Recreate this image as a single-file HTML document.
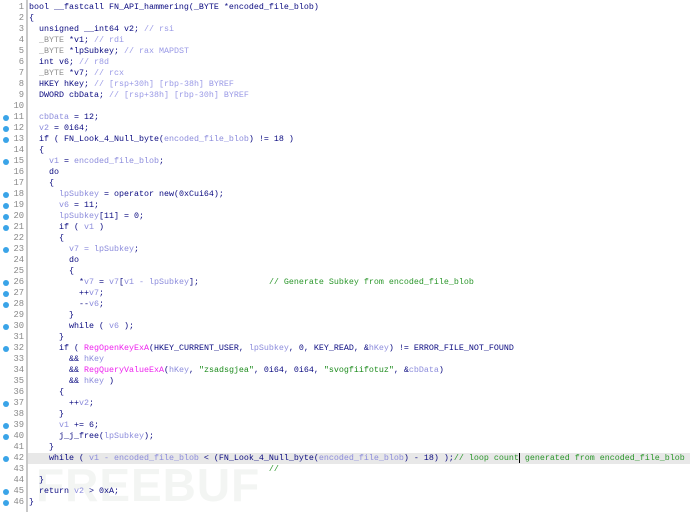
<!DOCTYPE html>
<html><head><meta charset="utf-8"><style>
html,body{margin:0;padding:0;background:#fff;width:690px;height:512px;overflow:hidden;position:relative}
#sep{position:absolute;left:26px;top:0;width:2px;height:512px;background:#c8c8c8}
#nums{position:absolute;left:0;top:0;width:26px;height:512px}
.ln{position:absolute;left:0;width:26px;text-align:right;font:8.8px/11px "Liberation Mono",monospace;color:#8a8a8a;padding-right:2px;box-sizing:border-box}
.dot{position:absolute;left:3px;width:6px;height:6px;border-radius:50%;background:#3aa4e8}
#code{position:absolute;left:29px;top:2px;width:661px;overflow:hidden;margin:0;font:8.33px/11px "Liberation Mono",monospace;color:#0a0a80;white-space:pre}
.v{color:#8c8cdc}.d{color:#909090}.c{color:#9a9ae6}.s{color:#1a8a1a}.f{color:#ee22ee}.g{color:#2a962a}
#hl{position:absolute;left:28px;top:453px;width:662px;height:11px;background:#e8e8e8}
#wm{position:absolute;left:36px;top:462px;font:bold 46px/46px "Liberation Sans",sans-serif;color:#f3f5f3;letter-spacing:1px}
.cur{border-left:1px solid #000}
</style></head><body>
<div id="hl"></div>
<div id="wm">FREEBUF</div>
<div id="sep"></div>
<div id="nums"></div>
<pre id="code">bool __fastcall FN_API_hammering(_BYTE *encoded_file_blob)
{
  unsigned __int64 v2; <span class="c">// rsi</span>
  <span class="d">_BYTE</span> *v1; <span class="c">// rdi</span>
  <span class="d">_BYTE</span> *lpSubkey; <span class="c">// rax MAPDST</span>
  int v6; <span class="c">// r8d</span>
  <span class="d">_BYTE</span> *v7; <span class="c">// rcx</span>
  HKEY hKey; <span class="c">// [rsp+30h] [rbp-38h] BYREF</span>
  DWORD cbData; <span class="c">// [rsp+38h] [rbp-30h] BYREF</span>

  <span class="v">cbData</span> = 12;
  <span class="v">v2</span> = 0i64;
  if ( FN_Look_4_Null_byte(<span class="v">encoded_file_blob</span>) != 18 )
  {
    <span class="v">v1</span> = <span class="v">encoded_file_blob</span>;
    do
    {
      <span class="v">lpSubkey</span> = operator new(0xCui64);
      <span class="v">v6</span> = 11;
      <span class="v">lpSubkey</span>[11] = 0;
      if ( <span class="v">v1</span> )
      {
        <span class="v">v7 = lpSubkey</span>;
        do
        {
          *<span class="v">v7</span> = <span class="v">v7</span>[<span class="v">v1 - lpSubkey</span>];              <span class="g">// Generate Subkey from encoded_file_blob</span>
          ++<span class="v">v7</span>;
          --<span class="v">v6</span>;
        }
        while ( <span class="v">v6</span> );
      }
      if ( <span class="f">RegOpenKeyExA</span>(HKEY_CURRENT_USER, <span class="v">lpSubkey</span>, 0, KEY_READ, &amp;<span class="v">hKey</span>) != ERROR_FILE_NOT_FOUND
        &amp;&amp; <span class="v">hKey</span>
        &amp;&amp; <span class="f">RegQueryValueExA</span>(<span class="v">hKey</span>, <span class="s">"zsadsgjea"</span>, 0i64, 0i64, <span class="s">"svogfiifotuz"</span>, &amp;<span class="v">cbData</span>)
        &amp;&amp; <span class="v">hKey</span> )
      {
        ++<span class="v">v2</span>;
      }
      <span class="v">v1</span> += 6;
      j_j_free(<span class="v">lpSubkey</span>);
    }
    while ( <span class="v">v1 - encoded_file_blob</span> &lt; (FN_Look_4_Null_byte(<span class="v">encoded_file_blob</span>) - 18) );<span class="g">// loop count<span class="cur"></span> generated from encoded_file_blob</span>
                                                <span class="g">//</span>
  }
  return <span class="v">v2</span> &gt; 0xA;
}</pre>
<script>
var dots=[11,12,13,15,18,19,20,21,23,26,27,28,30,32,37,39,40,42,45,46],h='';
for(var i=1;i<=46;i++){var t=2+(i-1)*11;h+='<div class="ln" style="top:'+t+'px">'+i+'</div>';if(dots.indexOf(i)>=0)h+='<div class="dot" style="top:'+(t+2.5)+'px"></div>';}
document.getElementById('nums').innerHTML=h;
</script>
</body></html>
